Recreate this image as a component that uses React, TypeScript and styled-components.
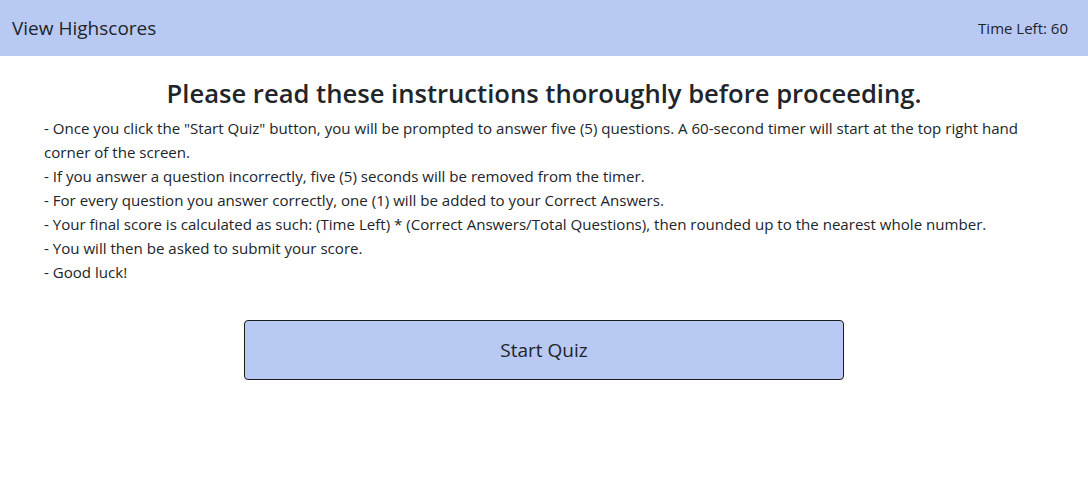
import React from "react";
import styled, { createGlobalStyle } from "styled-components";

const GlobalStyle = createGlobalStyle`
  body {
    margin: 0;
    background: #ffffff;
    color: #212529;
    font-family: "Open Sans", "Noto Sans", sans-serif;
  }
`;

const Header = styled.header`
  height: 56px;
  background-color: #b8c9f3;
  display: flex;
  align-items: center;
  justify-content: space-between;
  padding: 0 20px 0 12px;
`;

const HeaderLink = styled.span`
  font-size: 19px;
`;

const Timer = styled.span`
  font-size: 15px;
`;

const Main = styled.main`
  padding: 0 44px;
`;

const Title = styled.h1`
  margin: 23px 0 6px;
  text-align: center;
  font-size: 25.6px;
  font-weight: 600;
  line-height: 1.2;
`;

const Instructions = styled.div`
  font-size: 15.08px;
  line-height: 24px;
  max-width: 985px;
`;

const ButtonRow = styled.div`
  display: flex;
  justify-content: center;
  margin-top: 36px;
`;

const StartButton = styled.button`
  width: 600px;
  height: 60px;
  background-color: #b8c9f3;
  border: 1px solid #1c1c1c;
  border-radius: 4px;
  font-family: inherit;
  font-size: 19px;
  color: #212529;
  cursor: pointer;
`;

const lines = [
  '- Once you click the "Start Quiz" button, you will be prompted to answer five (5) questions. A 60-second timer will start at the top right hand corner of the screen.',
  "- If you answer a question incorrectly, five (5) seconds will be removed from the timer.",
  "- For every question you answer correctly, one (1) will be added to your Correct Answers.",
  "- Your final score is calculated as such: (Time Left) * (Correct Answers/Total Questions), then rounded up to the nearest whole number.",
  "- You will then be asked to submit your score.",
  "- Good luck!",
];

const App = () => {
  return (
    <>
      <GlobalStyle />
      <Header>
        <HeaderLink>View Highscores</HeaderLink>
        <Timer>Time Left: 60</Timer>
      </Header>
      <Main>
        <Title>Please read these instructions thoroughly before proceeding.</Title>
        <Instructions>
          {lines.map((line) => (
            <div key={line}>{line}</div>
          ))}
        </Instructions>
        <ButtonRow>
          <StartButton>Start Quiz</StartButton>
        </ButtonRow>
      </Main>
    </>
  );
};

export default App;
